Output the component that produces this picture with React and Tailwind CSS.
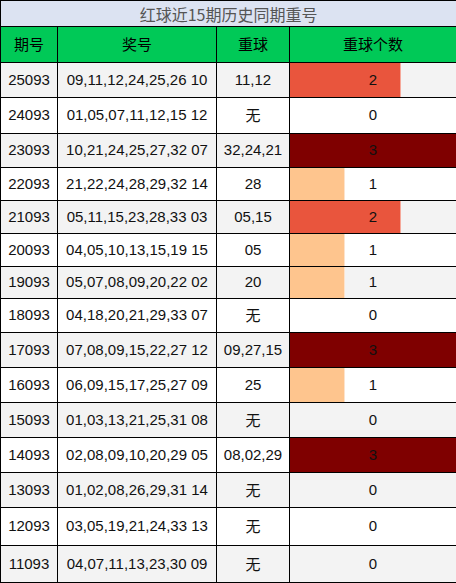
import React from 'react';

const rows = [
  { id: '25093', nums: '09,11,12,24,25,26 10', rep: '11,12', n: 2, h: 'h-[35px]' },
  { id: '24093', nums: '01,05,07,11,12,15 12', rep: '无', n: 0, h: 'h-[36px]' },
  { id: '23093', nums: '10,21,24,25,27,32 07', rep: '32,24,21', n: 3, h: 'h-[34px]' },
  { id: '22093', nums: '21,22,24,28,29,32 14', rep: '28', n: 1, h: 'h-[33px]' },
  { id: '21093', nums: '05,11,15,23,28,33 03', rep: '05,15', n: 2, h: 'h-[33px]' },
  { id: '20093', nums: '04,05,10,13,15,19 15', rep: '05', n: 1, h: 'h-[33px]' },
  { id: '19093', nums: '05,07,08,09,20,22 02', rep: '20', n: 1, h: 'h-[32px]' },
  { id: '18093', nums: '04,18,20,21,29,33 07', rep: '无', n: 0, h: 'h-[34px]' },
  { id: '17093', nums: '07,08,09,15,22,27 12', rep: '09,27,15', n: 3, h: 'h-[35px]' },
  { id: '16093', nums: '06,09,15,17,25,27 09', rep: '25', n: 1, h: 'h-[35px]' },
  { id: '15093', nums: '01,03,13,21,25,31 08', rep: '无', n: 0, h: 'h-[35px]' },
  { id: '14093', nums: '02,08,09,10,20,29 05', rep: '08,02,29', n: 3, h: 'h-[35px]' },
  { id: '13093', nums: '01,02,08,26,29,31 14', rep: '无', n: 0, h: 'h-[35px]' },
  { id: '12093', nums: '03,05,19,21,24,33 13', rep: '无', n: 0, h: 'h-[38px]' },
  { id: '11093', nums: '04,07,11,13,23,30 09', rep: '无', n: 0, h: 'h-[37px]' },
];

const bars = {
  1: 'w-1/3 bg-[#fec58e] border-r border-[#fde3cc]',
  2: 'w-2/3 bg-[#e9553d] border-r border-[#f5a89a]',
  3: 'w-full bg-[#7f0000]',
};

const cjk = "font-['Noto_Sans_CJK_SC',sans-serif]";

export default function App() {
  return (
    <div className="w-[456px] bg-white font-['Liberation_Sans','Noto_Sans_CJK_SC',sans-serif] text-[15px] text-[#111]">
      <table className="w-[456px] table-fixed border-collapse border border-black">
        <colgroup>
          <col className="w-[57px]" />
          <col className="w-[159px]" />
          <col className="w-[73px]" />
          <col className="w-[167px]" />
        </colgroup>
        <thead>
          {/* title */}
          <tr className="h-[26px] bg-[#dce3f2]">
            <th colSpan={4} className={`border border-black p-0 text-[16px] font-normal text-[#555] leading-none ${cjk}`}>
              红球近15期历史同期重号
            </th>
          </tr>
          <tr className="h-[36px] bg-[#00c957]">
            {['期号', '奖号', '重球', '重球个数'].map((t) => (
              <th key={t} className={`border border-black p-0 text-[15px] font-normal text-black ${cjk}`}>
                {t}
              </th>
            ))}
          </tr>
        </thead>
        <tbody>
          {rows.map((r, i) => (
            <tr key={r.id} className={`${r.h} ${i % 2 === 0 ? 'bg-[#f3f3f3]' : 'bg-white'}`}>
              <td className="border border-black p-0 text-center">{r.id}</td>
              <td className="border border-black p-0 text-center whitespace-nowrap">{r.nums}</td>
              <td className={`border border-black p-0 text-center ${r.rep === '无' ? cjk : ''}`}>{r.rep}</td>
              <td className="relative border border-black p-0 text-center">
                {r.n > 0 && <div className={`absolute left-0 top-0 bottom-0 ${bars[r.n]}`} />}
                <span className="relative">{r.n}</span>
              </td>
            </tr>
          ))}
        </tbody>
      </table>
    </div>
  );
}
